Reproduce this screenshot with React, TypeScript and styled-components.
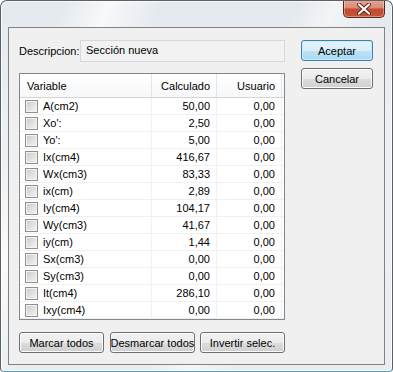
import React from 'react';
import styled, { createGlobalStyle } from 'styled-components';

const GlobalStyle = createGlobalStyle`
  html, body {
    margin: 0;
    padding: 0;
    background: #ffffff;
  }
  * {
    box-sizing: border-box;
  }
`

const Window = styled.div`
  width: 393px;
  height: 372px;
  border: 1px solid #5c5f63;
  border-bottom-color: #4aa3c8;
  border-radius: 7px 7px 4px 4px;
  padding: 0 7px 6px;
  display: flex;
  flex-direction: column;
  font-family: 'Liberation Sans', Arial, sans-serif;
  font-size: 11px;
  color: #000;
  background:
    linear-gradient(112deg, rgba(255,255,255,0) 12%, rgba(255,255,255,0.7) 20%, rgba(255,255,255,0) 30%, rgba(255,255,255,0) 55%, rgba(255,255,255,0.5) 62%, rgba(255,255,255,0) 70%),
    linear-gradient(to bottom, #e4e9ee, #eef1f4 40%, #e9edf1);
  box-shadow: inset 0 0 0 1px rgba(255,255,255,0.8);
  overflow: hidden;
`

const TitleBar = styled.div`
  height: 26px;
  display: flex;
  justify-content: flex-end;
  align-items: flex-start;
`

const CloseButton = styled.div`
  width: 42px;
  height: 18px;
  margin-top: -1px;
  border: 1px solid #5e241a;
  border-top: none;
  border-radius: 0 0 5px 5px;
  background: linear-gradient(to bottom, #e9a797 0%, #d98a78 45%, #c24a30 55%, #c8543a 100%);
  box-shadow: inset 0 0 0 1px rgba(255,255,255,0.35);
  display: flex;
  align-items: center;
  justify-content: center;
`

const Client = styled.div`
  flex: 1;
  border: 1px solid #828282;
  background: #f0f0f0;
  padding: 12px 0 0 10px;
  display: grid;
  grid-template-columns: 266px 72px;
  column-gap: 16px;
  align-items: start;
`

const MainColumn = styled.div`
  display: flex;
  flex-direction: column;
`

const SideColumn = styled.div`
  display: flex;
  flex-direction: column;
  gap: 7px;
`

const DescRow = styled.div`
  display: flex;
  align-items: center;
  height: 22px;
  margin-bottom: 11px;
`

const Label = styled.span`
  width: 61px;
  flex: none;
`

const Field = styled.div`
  flex: 1;
  height: 22px;
  border: 1px solid #d5d8dc;
  background: #f2f2f2;
  padding: 2px 5px 0 5px;
  line-height: 15px;
`

const List = styled.div`
  height: 247px;
  border: 1px solid #828790;
  background: #fff;
`

const ListRow = styled.div<{ $header?: boolean }>`
  display: grid;
  grid-template-columns: 132px 65px 65px 1fr;
  height: ${p => (p.$header ? '24px' : '17px')};
  border-bottom: 1px solid ${p => (p.$header ? '#d5d5d5' : '#f0f0f0')};
  background: ${p => (p.$header ? 'linear-gradient(to bottom, #ffffff, #f7f8f9)' : '#fff')};
`

const Cell = styled.div<{ $right?: boolean; $header?: boolean }>`
  display: flex;
  align-items: center;
  justify-content: ${p => (p.$right ? 'flex-end' : 'flex-start')};
  padding: ${p => (p.$right ? '0 6px 0 0' : p.$header ? '0 0 0 7px' : '0 0 0 5px')};
  border-right: 1px solid ${p => (p.$header ? '#e3e5e8' : '#f0f0f0')};
  white-space: nowrap;
  color: #000;
  &:last-child {
    border-right: none;
  }
`

const Check = styled.span`
  width: 13px;
  height: 13px;
  flex: none;
  margin-right: 5px;
  border: 1px solid #8f8f8f;
  background: linear-gradient(135deg, #c8c8c8 0%, #e0e0e0 50%, #f4f4f4 100%);
  box-shadow: inset 0 0 0 1px #f3f3f3;
`

const ButtonRow = styled.div`
  margin-top: 12px;
  display: flex;
  justify-content: space-between;
`

const Button = styled.button<{ $default?: boolean; $wide?: number }>`
  width: ${p => p.$wide ?? 72}px;
  height: 21px;
  padding: 0;
  font-family: 'Liberation Sans', Arial, sans-serif;
  font-size: 11px;
  color: #000;
  border: 1px solid ${p => (p.$default ? '#3c7fb1' : '#707070')};
  border-radius: 3px;
  background: ${p =>
    p.$default
      ? 'linear-gradient(to bottom, #e5f4fc 0%, #d9eef9 50%, #bde3f7 51%, #a9d9f2 100%)'
      : 'linear-gradient(to bottom, #f2f2f2 0%, #ebebeb 50%, #dddddd 51%, #cfcfcf 100%)'};
  box-shadow: inset 0 0 0 1px ${p => (p.$default ? '#c9ecfd' : '#fcfcfc')};
  white-space: nowrap;
`

const rows: [string, string][] = [
  ['A(cm2)', '50,00'],
  ["Xo':", '2,50'],
  ["Yo':", '5,00'],
  ['Ix(cm4)', '416,67'],
  ['Wx(cm3)', '83,33'],
  ['ix(cm)', '2,89'],
  ['Iy(cm4)', '104,17'],
  ['Wy(cm3)', '41,67'],
  ['iy(cm)', '1,44'],
  ['Sx(cm3)', '0,00'],
  ['Sy(cm3)', '0,00'],
  ['It(cm4)', '286,10'],
  ['Ixy(cm4)', '0,00'],
];

function App() {
  return (
    <>
      <GlobalStyle />
      <Window>
        <TitleBar>
          <CloseButton>
            <svg width="16" height="12" viewBox="0 0 16 12">
              <path d="M3 1.5 L13 10.5 M13 1.5 L3 10.5" stroke="#5a2018" strokeWidth="4" strokeLinecap="round" />
              <path d="M3 1.5 L13 10.5 M13 1.5 L3 10.5" stroke="#ffffff" strokeWidth="2.2" strokeLinecap="round" />
            </svg>
          </CloseButton>
        </TitleBar>
        <Client>
          <MainColumn>
            <DescRow>
              <Label>Descripcion:</Label>
              <Field>Sección nueva</Field>
            </DescRow>
            <List>
              <ListRow $header>
                <Cell $header>Variable</Cell>
                <Cell $header $right>Calculado</Cell>
                <Cell $header $right>Usuario</Cell>
                <Cell $header />
              </ListRow>
              {rows.map(([name, value]) => (
                <ListRow key={name}>
                  <Cell>
                    <Check />
                    {name}
                  </Cell>
                  <Cell $right>{value}</Cell>
                  <Cell $right>0,00</Cell>
                  <Cell />
                </ListRow>
              ))}
            </List>
            <ButtonRow>
              <Button $wide={85}>Marcar todos</Button>
              <Button $wide={85}>Desmarcar todos</Button>
              <Button $wide={85}>Invertir selec.</Button>
            </ButtonRow>
          </MainColumn>
          <SideColumn>
            <Button $default>Aceptar</Button>
            <Button>Cancelar</Button>
          </SideColumn>
        </Client>
      </Window>
    </>
  );
}

export default App;
